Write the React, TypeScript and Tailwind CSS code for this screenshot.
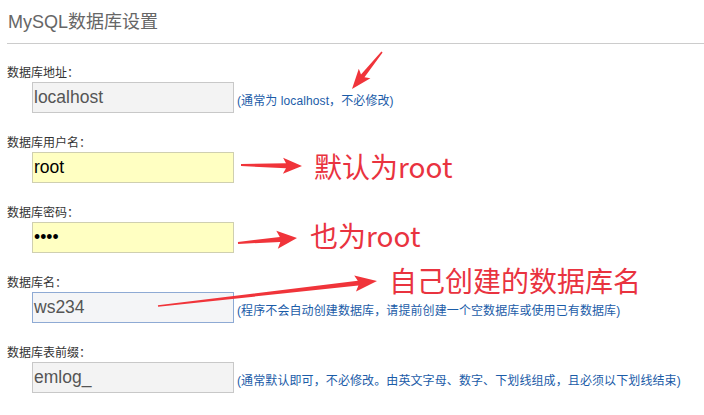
import React from "react";

type Pt = [number, number];

function arrowPoints(t: Pt, p: Pt, headLen: number, headHalf: number, w0: number, w1: number, notch = 3): string {
  const dx = p[0] - t[0];
  const dy = p[1] - t[1];
  const len = Math.hypot(dx, dy);
  const ux = dx / len;
  const uy = dy / len;
  const nx = -uy;
  const ny = ux;
  const bx = p[0] - ux * headLen;
  const by = p[1] - uy * headLen;
  const cx = bx - ux * notch;
  const cy = by - uy * notch;
  const pts: Pt[] = [
    [t[0] + (nx * w0) / 2, t[1] + (ny * w0) / 2],
    [bx + (nx * w1) / 2, by + (ny * w1) / 2],
    [cx + nx * headHalf, cy + ny * headHalf],
    [p[0], p[1]],
    [cx - nx * headHalf, cy - ny * headHalf],
    [bx - (nx * w1) / 2, by - (ny * w1) / 2],
    [t[0] - (nx * w0) / 2, t[1] - (ny * w0) / 2],
  ];
  return pts.map((q) => `${q[0].toFixed(1)},${q[1].toFixed(1)}`).join(" ");
}

type Row = {
  label: string;
  value: string;
  box: string;
  valueColor: string;
  hint?: string;
};

const rows: Row[] = [
  {
    label: "数据库地址：",
    value: "localhost",
    box: "bg-[#f3f3f3] border-[#c8c8c8]",
    valueColor: "text-[#555555]",
    hint: "(通常为 localhost，不必修改)",
  },
  {
    label: "数据库用户名：",
    value: "root",
    box: "bg-[#ffffc2] border-[#cfcfb0]",
    valueColor: "text-black",
  },
  {
    label: "数据库密码：",
    value: "••••",
    box: "bg-[#ffffc2] border-[#cfcfb0]",
    valueColor: "text-black",
  },
  {
    label: "数据库名：",
    value: "ws234",
    box: "bg-[#f4f5f7] border-[#8eaad4]",
    valueColor: "text-[#555555]",
    hint: "(程序不会自动创建数据库，请提前创建一个空数据库或使用已有数据库)",
  },
  {
    label: "数据库表前缀：",
    value: "emlog_",
    box: "bg-[#f3f3f3] border-[#c8c8c8]",
    valueColor: "text-[#555555]",
    hint: "(通常默认即可，不必修改。由英文字母、数字、下划线组成，且必须以下划线结束)",
  },
];

export default function App() {
  return (
    <div className="relative w-[704px] h-[415px] bg-white overflow-hidden font-['Liberation_Sans','Noto_Sans_CJK_SC',sans-serif]">
      <div className="ml-[7px] pl-px pt-[11px] pb-[10px] border-b border-[#cccccc] text-[18px] leading-[22px] text-[#666666]">
        MySQL数据库设置
      </div>
      <div className="pl-[7px] pt-[20px] flex flex-col gap-[21px]">
        {rows.map((r) => (
          <div key={r.label} className="flex flex-col gap-[2px]">
            <div className="text-[12px] leading-[16px] text-[#333333] font-['Noto_Sans_CJK_SC',sans-serif]">
              {r.label}
            </div>
            <div className="pl-[25px] flex items-end gap-[3px]">
              <div className={`w-[202px] h-[31px] border flex items-center pl-[1px] text-[17.5px] ${r.box} ${r.valueColor}`}>
                {r.value}
              </div>
              {r.hint && (
                <span className="mb-[4px] text-[12px] leading-[16px] tracking-[0.1px] text-[#1b5ca8] whitespace-nowrap">
                  {r.hint}
                </span>
              )}
            </div>
          </div>
        ))}
      </div>

      <svg className="absolute left-0 top-0 pointer-events-none" width="704" height="415" viewBox="0 0 704 415">
        <polygon points={arrowPoints([382, 52], [352, 89], 17, 7.5, 1.5, 4.5)} fill="#f0343a" />
        <polygon points={arrowPoints([241, 165], [302, 166], 16, 8, 2, 5)} fill="#f0343a" />
        <polygon points={arrowPoints([238, 243], [297, 238], 17, 9, 2, 5)} fill="#f0343a" />
        <polygon points={arrowPoints([158, 306], [377, 281], 19, 8, 1.5, 5)} fill="#f0343a" />
      </svg>

      <div className="absolute left-[314px] top-[152px] text-[28px] leading-[28px] text-[#e9333f] whitespace-nowrap font-['Noto_Sans_CJK_SC',sans-serif]">
        默认为root
      </div>
      <div className="absolute left-[310px] top-[221px] text-[28px] leading-[28px] text-[#e9333f] whitespace-nowrap font-['Noto_Sans_CJK_SC',sans-serif]">
        也为root
      </div>
      <div className="absolute left-[389px] top-[266px] text-[28px] leading-[28px] text-[#e9333f] whitespace-nowrap font-['Noto_Sans_CJK_SC',sans-serif]">
        自己创建的数据库名
      </div>
    </div>
  );
}
